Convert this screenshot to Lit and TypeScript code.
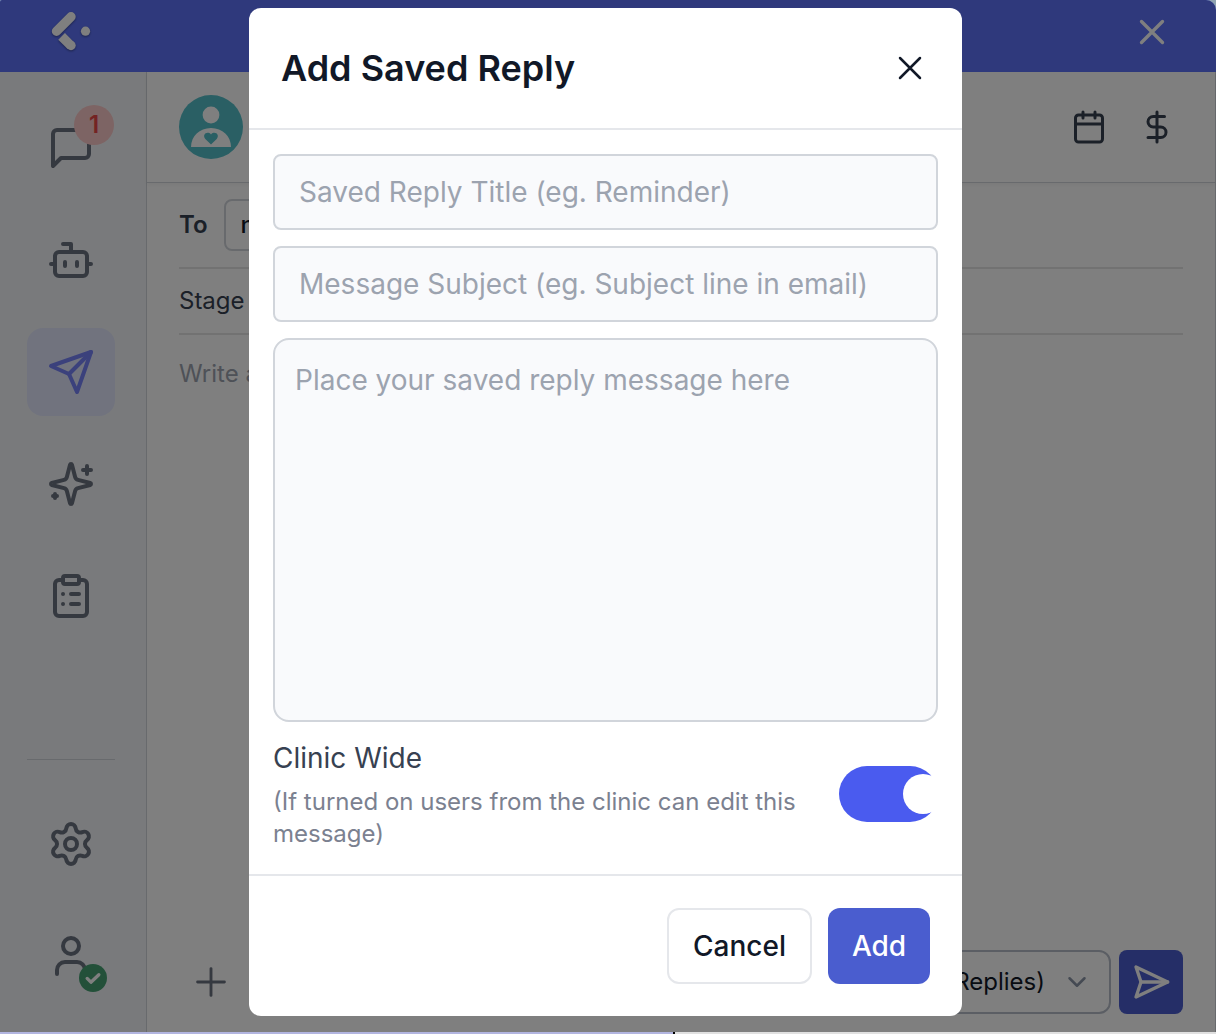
import { LitElement, html, css, svg } from 'lit';
import { customElement, property, state } from 'lit/decorators.js';
import { classMap } from 'lit/directives/class-map.js';

// 24x24 stroke icons
const ICONS = {
  chat: svg`<path d="M21 15a2 2 0 0 1-2 2H7l-4 4V5a2 2 0 0 1 2-2h14a2 2 0 0 1 2 2z"/>`,
  bot: svg`<path d="M12 8V4H8"/><rect width="16" height="12" x="4" y="8" rx="2"/><path d="M2 14h2M20 14h2M15 13v2M9 13v2"/>`,
  send: svg`<path d="m22 2-7 20-4-9-9-4Z"/><path d="M22 2 11 13"/>`,
  sparkles: svg`<path d="M9.937 15.5A2 2 0 0 0 8.5 14.063l-6.135-1.582a.5.5 0 0 1 0-.962L8.5 9.936A2 2 0 0 0 9.937 8.5l1.582-6.135a.5.5 0 0 1 .963 0L14.063 8.5A2 2 0 0 0 15.5 9.937l6.135 1.581a.5.5 0 0 1 0 .964L15.5 14.063a2 2 0 0 0-1.437 1.437l-1.582 6.135a.5.5 0 0 1-.963 0z"/><path d="M20 3v4M22 5h-4M4 17v2M5 18H3"/>`,
  clipboard: svg`<rect width="8" height="4" x="8" y="2" rx="1"/><path d="M16 4h2a2 2 0 0 1 2 2v14a2 2 0 0 1-2 2H6a2 2 0 0 1-2-2V6a2 2 0 0 1 2-2h2M12 11h4M12 16h4M8 11h.01M8 16h.01"/>`,
  settings: svg`<path d="M9.671 4.136a2.34 2.34 0 0 1 4.659 0 2.34 2.34 0 0 0 3.319 1.915 2.34 2.34 0 0 1 2.33 4.033 2.34 2.34 0 0 0 0 3.831 2.34 2.34 0 0 1-2.33 4.033 2.34 2.34 0 0 0-3.319 1.915 2.34 2.34 0 0 1-4.659 0 2.34 2.34 0 0 0-3.32-1.915 2.34 2.34 0 0 1-2.33-4.033 2.34 2.34 0 0 0 0-3.831A2.34 2.34 0 0 1 6.35 6.051a2.34 2.34 0 0 0 3.319-1.915"/><circle cx="12" cy="12" r="3"/>`,
  user: svg`<path d="M19 21v-2a4 4 0 0 0-4-4H9a4 4 0 0 0-4 4v2"/><circle cx="12" cy="7" r="4"/>`,
  calendar: svg`<path d="M8 2v4M16 2v4"/><rect width="18" height="18" x="3" y="4" rx="2"/><path d="M3 10h18"/>`,
  dollar: svg`<path d="M12 2v20M17 5H9.5a3.5 3.5 0 0 0 0 7h5a3.5 3.5 0 0 1 0 7H6"/>`,
  sendRight: svg`<path d="m3 3 3 9-3 9 19-9Z"/><path d="M6 12h16"/>`,
  close: svg`<path d="M18 6 6 18M6 6l12 12"/>`,
  plus: svg`<path d="M5 12h14M12 5v14"/>`,
  chevron: svg`<path d="m6 9 6 6 6-6"/>`,
  check: svg`<path d="m5 12.5 4.5 4.5L19 8"/>`,
};

type IconName = keyof typeof ICONS;

@customElement('line-icon')
class LineIcon extends LitElement {
  static styles = css`
    :host {
      display: block;
      flex: none;
      line-height: 0;
    }
    svg {
      fill: none;
      stroke: currentColor;
      stroke-linecap: round;
      stroke-linejoin: round;
    }
  `;

  @property() name: IconName = 'close';
  @property({ type: Number }) size = 48;
  @property({ type: Number }) weight = 2;

  render() {
    return html`
      <svg width=${this.size} height=${this.size} viewBox="0 0 24 24" stroke-width=${this.weight}>
        ${ICONS[this.name]}
      </svg>
    `;
  }
}

@customElement('side-nav')
class SideNav extends LitElement {
  static styles = css`
    :host {
      display: flex;
      flex-direction: column;
      box-sizing: border-box;
      width: 147px;
      padding: 32px 31px 32px 27px;
      background: #f3f5f8;
      border-right: 1px solid #d1d5db;
      color: #6b7280;
    }
    .group {
      display: flex;
      flex-direction: column;
      gap: 24px;
    }
    .bottom {
      margin-top: auto;
      padding-top: 40px;
      border-top: 1px solid #d1d5db;
    }
    .item {
      position: relative;
      display: flex;
      align-items: center;
      justify-content: center;
      height: 88px;
      border-radius: 16px;
    }
    .item.active {
      background: #e2e7fd;
      color: #7782f8;
    }
    .count {
      position: absolute;
      left: 47px;
      top: 1px;
      width: 40px;
      height: 40px;
      border-radius: 50%;
      background: #fbc8c8;
      color: #e84646;
      font-size: 24px;
      font-weight: 600;
      line-height: 40px;
      text-align: center;
    }
    .verified {
      position: absolute;
      left: 52px;
      top: 52px;
      display: flex;
      align-items: center;
      justify-content: center;
      width: 28px;
      height: 28px;
      border-radius: 50%;
      background: #46a173;
      color: #fff;
    }
  `;

  @property() active = 'send';

  private items: IconName[] = ['chat', 'bot', 'send', 'sparkles', 'clipboard'];

  render() {
    return html`
      <div class="group">
        ${this.items.map(
          (name) => html`
            <div class=${classMap({ item: true, active: name === this.active })}>
              <line-icon name=${name}></line-icon>
              ${name === 'chat' ? html`<span class="count">1</span>` : ''}
            </div>
          `
        )}
      </div>
      <div class="group bottom">
        <div class="item"><line-icon name="settings"></line-icon></div>
        <div class="item">
          <line-icon name="user"></line-icon>
          <span class="verified"><line-icon name="check" size="20" weight="4"></line-icon></span>
        </div>
      </div>
    `;
  }
}

@customElement('message-composer')
class MessageComposer extends LitElement {
  static styles = css`
    :host {
      display: flex;
      flex-direction: column;
      flex: 1;
      min-width: 0;
      background: #fff;
      color: #374151;
      font-size: 24px;
    }
    .contact {
      display: flex;
      align-items: center;
      box-sizing: border-box;
      height: 111px;
      padding: 0 40px 0 32px;
      border-bottom: 1px solid #d1d5db;
      box-shadow: 0 2px 4px rgba(0, 0, 0, 0.05);
    }
    .avatar {
      display: block;
    }
    .actions {
      display: flex;
      gap: 32px;
      margin-left: auto;
    }
    .fields {
      display: flex;
      flex-direction: column;
      flex: 1;
      padding: 0 32px;
    }
    .row {
      display: flex;
      align-items: center;
      box-sizing: border-box;
      border-bottom: 2px solid #e5e5e5;
    }
    .row .name {
      padding-bottom: 2px;
    }
    .to {
      height: 86px;
      gap: 16px;
      font-weight: 600;
    }
    .chip {
      box-sizing: border-box;
      width: 120px;
      height: 52px;
      padding: 0 15px;
      border: 2px solid #d1d5db;
      border-radius: 8px;
      color: #111827;
      font-weight: 500;
      line-height: 48px;
    }
    .stage {
      height: 66px;
    }
    .placeholder {
      padding-top: 23px;
      color: #9ca3af;
      line-height: 32px;
    }
    .toolbar {
      display: flex;
      align-items: center;
      justify-content: space-between;
      padding: 0 32px 18px 41px;
    }
    .plus {
      color: #6b7280;
    }
    .send-group {
      display: flex;
      gap: 8px;
    }
    .select {
      display: flex;
      align-items: center;
      justify-content: flex-end;
      gap: 17px;
      box-sizing: border-box;
      width: 300px;
      height: 64px;
      padding-right: 17px;
      border: 2px solid #b6bdc8;
      border-radius: 12px;
      color: #111827;
    }
    .select span {
      padding-bottom: 2px;
    }
    .select line-icon {
      color: #8a95a6;
    }
    .send {
      display: flex;
      align-items: center;
      justify-content: center;
      width: 64px;
      height: 64px;
      border-radius: 8px;
      background: #4a5dcf;
      color: #fff;
    }
  `;

  render() {
    return html`
      <div class="contact">
        <svg class="avatar" width="64" height="64" viewBox="0 0 64 64">
          <circle cx="32" cy="32" r="32" fill="#55bec8" />
          <circle cx="32" cy="20" r="8.4" fill="#fff" />
          <path d="M12 52c0-10.500 8.500-19 20-19s20 8.500 20 19z" fill="#fff" />
          <path d="M32 49.500l-5.700-5.600c-3.600-4.200 1.900-8.400 5.700-4.500 3.800-3.900 9.300.3 5.700 4.500z" fill="#55bec8" />
        </svg>
        <div class="actions">
          <line-icon name="calendar" size="36"></line-icon>
          <line-icon name="dollar" size="36"></line-icon>
        </div>
      </div>
      <div class="fields">
        <div class="row to"><span class="name">To</span><span class="chip">n</span></div>
        <div class="row stage"><span class="name">Stage</span></div>
        <div class="placeholder">Write a message</div>
      </div>
      <div class="toolbar">
        <line-icon class="plus" name="plus" size="46" weight="1.5"></line-icon>
        <div class="send-group">
          <div class="select">
            <span>(Saved Replies)</span>
            <line-icon name="chevron" size="30"></line-icon>
          </div>
          <div class="send"><line-icon name="sendRight" size="40"></line-icon></div>
        </div>
      </div>
    `;
  }
}

@customElement('saved-reply-dialog')
class SavedReplyDialog extends LitElement {
  static styles = css`
    :host {
      display: flex;
      flex-direction: column;
      width: 713px;
      height: 1008px;
      border-radius: 12px;
      background: #fff;
      color: #111827;
      font-size: 28px;
    }
    header {
      display: flex;
      align-items: center;
      justify-content: space-between;
      box-sizing: border-box;
      height: 122px;
      padding: 0 32px;
      border-bottom: 2px solid #e5e7eb;
    }
    h2 {
      margin: 0;
      font-size: 36px;
      font-weight: 600;
    }
    .body {
      display: flex;
      flex-direction: column;
      flex: 1;
      gap: 16px;
      padding: 24px 24px 0;
    }
    input,
    textarea {
      display: block;
      box-sizing: border-box;
      width: 100%;
      margin: 0;
      border: 2px solid #d1d5db;
      background: #f9fafc;
      color: #111827;
      font: inherit;
      outline: none;
      resize: none;
    }
    input {
      height: 76px;
      padding: 0 24px;
      border-radius: 8px;
    }
    textarea {
      height: 384px;
      padding: 20px;
      border-radius: 16px;
      line-height: 40px;
    }
    ::placeholder {
      color: #9ca3af;
      opacity: 1;
    }
    .clinic {
      display: flex;
      align-items: center;
      justify-content: space-between;
    }
    .clinic-text {
      width: 540px;
    }
    .label {
      color: #374151;
      line-height: 40px;
    }
    .hint {
      margin-top: 8px;
      color: #7b8190;
      font-size: 24px;
      line-height: 32px;
    }
    .track {
      display: flex;
      align-items: center;
      box-sizing: border-box;
      width: 99px;
      height: 56px;
      padding: 8px;
      border-radius: 28px;
      background: #9ca3af;
    }
    .track.on {
      padding-left: 64px;
      padding-right: 0;
      background: #4a5bef;
    }
    .knob {
      flex: none;
      width: 40px;
      height: 40px;
      border-radius: 50%;
      background: #fff;
    }
    footer {
      display: flex;
      align-items: center;
      justify-content: flex-end;
      gap: 16px;
      box-sizing: border-box;
      height: 142px;
      padding: 0 32px;
      border-top: 2px solid #e5e7eb;
    }
    button {
      box-sizing: border-box;
      height: 76px;
      padding: 0;
      border: 2px solid #e5e7eb;
      border-radius: 12px;
      background: #fff;
      color: #111827;
      font: inherit;
      font-weight: 500;
    }
    .cancel {
      width: 145px;
    }
    .add {
      width: 102px;
      border: none;
      background: #4a5dcf;
      color: #fff;
    }
  `;

  @state() private clinicWide = true;

  private toggle() {
    this.clinicWide = !this.clinicWide;
  }

  render() {
    return html`
      <header>
        <h2>Add Saved Reply</h2>
        <line-icon name="close" size="40" weight="1.5"></line-icon>
      </header>
      <div class="body">
        <input placeholder="Saved Reply Title (eg. Reminder)" />
        <input placeholder="Message Subject (eg. Subject line in email)" />
        <textarea placeholder="Place your saved reply message here"></textarea>
        <div class="clinic">
          <div class="clinic-text">
            <div class="label">Clinic Wide</div>
            <div class="hint">(If turned on users from the clinic can edit this message)</div>
          </div>
          <div class=${classMap({ track: true, on: this.clinicWide })} @click=${this.toggle}>
            <div class="knob"></div>
          </div>
        </div>
      </div>
      <footer>
        <button class="cancel">Cancel</button>
        <button class="add">Add</button>
      </footer>
    `;
  }
}

@customElement('app-root')
class AppRoot extends LitElement {
  static styles = css`
    :host {
      position: relative;
      display: flex;
      flex-direction: column;
      width: 1216px;
      height: 1034px;
      overflow: hidden;
      background: #8fa3b0;
      font-family: Inter, 'Liberation Sans', sans-serif;
    }
    .window {
      position: relative;
      display: flex;
      flex-direction: column;
      height: 1032px;
      border-radius: 2px 10px 0 0;
      overflow: hidden;
    }
    .topbar {
      display: flex;
      align-items: center;
      justify-content: space-between;
      box-sizing: border-box;
      height: 72px;
      padding: 0 43px 8px 47px;
      background: #5e73f9;
      color: #fff;
    }
    .logo {
      filter: drop-shadow(0 1px 1px rgba(0, 0, 0, 0.4));
    }
    .main {
      display: flex;
      flex: 1;
      min-height: 0;
      border-right: 1px solid #d1d5db;
    }
    .overlay {
      position: absolute;
      inset: 0;
      display: flex;
      align-items: flex-start;
      padding: 8px 0 0 249px;
      background: rgba(0, 0, 0, 0.5);
    }
    .strip {
      display: flex;
      height: 2px;
      background: #e0e0e0;
    }
    .strip-fill {
      width: 673px;
      border-right: 2px solid #000;
      background: #b2b5e0;
    }
  `;

  render() {
    return html`
      <div class="window">
        <div class="topbar">
          <svg class="logo" width="48" height="48" viewBox="0 4 48 48" fill="none" stroke="#fff" stroke-width="9.400">
            <path d="M9.500 27.200 24 12.700" stroke-linecap="round" />
            <path d="M14.600 32.400 24 41.800" />
            <circle cx="24" cy="41.500" r="4.700" fill="#fff" stroke="none" />
            <circle cx="38.500" cy="27.200" r="4.600" fill="#fff" stroke="none" />
          </svg>
          <line-icon name="close" size="42" weight="1.900"></line-icon>
        </div>
        <div class="main">
          <side-nav></side-nav>
          <message-composer></message-composer>
        </div>
        <div class="overlay"><saved-reply-dialog></saved-reply-dialog></div>
      </div>
      <div class="strip"><div class="strip-fill"></div></div>
    `;
  }
}
